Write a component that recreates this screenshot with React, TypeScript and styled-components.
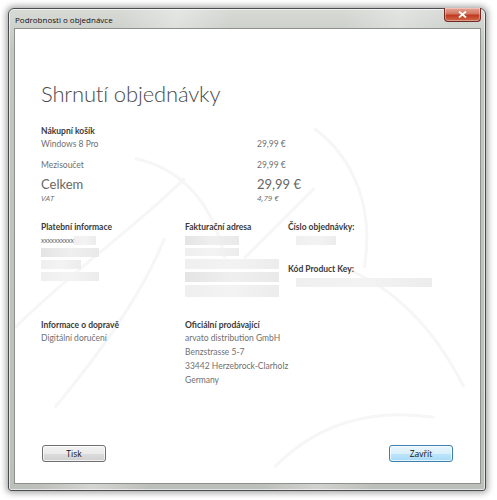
import React from 'react'
import styled, { createGlobalStyle } from 'styled-components'

const GlobalStyle = createGlobalStyle`
  html, body {
    margin: 0;
    padding: 0;
    background: #ffffff;
  }
  body {
    font-family: Lato, "Open Sans", sans-serif;
    color: #555;
  }
`

const seller = [
  'arvato distribution GmbH',
  'Benzstrasse 5-7',
  '33442 Herzebrock-Clarholz',
  'Germany',
]

export default function App() {
  return (
    <>
      <GlobalStyle />
      <Page>
        <Window>
          <TitleBar>
            <Caption>Podrobnosti o objednávce</Caption>
            <CloseButton aria-label="close">
              <svg width="9" height="7" viewBox="0 0 9 7">
                <path d="M1 0.5 L8 6.5 M8 0.5 L1 6.5" stroke="#fff" strokeWidth="1.8" />
              </svg>
            </CloseButton>
          </TitleBar>
          <Client>
            <Watermark viewBox="0 0 466 456" preserveAspectRatio="none">
              <path d="M0 300 C 60 240, 120 200, 170 150" />
              <path d="M40 380 C 90 320, 130 260, 150 210" />
              <path d="M120 130 C 170 140, 200 180, 210 230" />
              <path d="M300 100 C 340 130, 360 180, 350 240" />
              <path d="M230 230 L 300 160" />
              <path d="M330 240 C 380 260, 420 300, 450 360" />
              <path d="M260 440 C 300 400, 350 380, 420 390" />
            </Watermark>
            <Content>
              <Heading>Shrnutí objednávky</Heading>

              <Cart>
                <Label>Nákupní košík</Label>
                <Row>
                  <Cell>Windows 8 Pro</Cell>
                  <Cell>29,99 €</Cell>
                </Row>
                <Row $gap={9}>
                  <Cell>Mezisoučet</Cell>
                  <Cell>29,99 €</Cell>
                </Row>
                <Row $gap={6}>
                  <Cell $big>Celkem</Cell>
                  <Cell $big>29,99 €</Cell>
                </Row>
                <Row>
                  <Cell $italic>VAT</Cell>
                  <Cell $italic>4,79 €</Cell>
                </Row>
              </Cart>

              <InfoGrid>
                <Column>
                  <Label>Platební informace</Label>
                  <Masked>
                    <MaskLine>
                      <Tiny>xxxxxxxxxx</Tiny>
                      <Blot $w={22} $h={9} />
                    </MaskLine>
                    <Blot $w={58} $h={9} $dark />
                    <Blot $w={40} $h={9} />
                    <Blot $w={58} $h={9} />
                  </Masked>
                </Column>
                <Column>
                  <Label>Fakturační adresa</Label>
                  <Masked>
                    <Blot $w={54} $h={9} $dark />
                    <Blot $w={54} $h={8} />
                    <Blot $w={94} $h={10} />
                    <Blot $w={94} $h={10} $dark />
                    <Blot $w={94} $h={12} />
                  </Masked>
                </Column>
                <Column>
                  <Label>Číslo objednávky:</Label>
                  <Masked>
                    <Blot $w={40} $h={9} $indent={8} />
                  </Masked>
                  <Label $top={18}>Kód Product Key:</Label>
                  <Masked>
                    <Blot $w={136} $h={9} $indent={8} />
                  </Masked>
                </Column>
              </InfoGrid>

              <InfoGrid $top={22}>
                <Column>
                  <Label>Informace o dopravě</Label>
                  <Text>Digitální doručení</Text>
                </Column>
                <Column $span={2}>
                  <Label>Oficiální prodávající</Label>
                  {seller.map((line) => (
                    <Text key={line}>{line}</Text>
                  ))}
                </Column>
              </InfoGrid>
            </Content>

            <Footer>
              <Button>Tisk</Button>
              <Button $primary>Zavřít</Button>
            </Footer>
          </Client>
        </Window>
      </Page>
    </>
  )
}

const Page = styled.div`
  width: 497px;
  height: 500px;
  padding: 8px 0 0 8px;
  box-sizing: border-box;
`

const Window = styled.div`
  width: 478px;
  height: 483px;
  box-sizing: border-box;
  display: flex;
  flex-direction: column;
  padding: 0 4px 6px 5px;
  border: 1px solid #4a4d4f;
  border-radius: 6px 6px 3px 3px;
  background: linear-gradient(
      100deg,
      rgba(255, 255, 255, 0) 20%,
      rgba(255, 255, 255, 0.35) 30%,
      rgba(255, 255, 255, 0) 40%,
      rgba(255, 255, 255, 0) 60%,
      rgba(255, 255, 255, 0.3) 70%,
      rgba(255, 255, 255, 0) 80%
    ),
    linear-gradient(#d8dad6, #c3c6c1 40px, #bdbfba);
  box-shadow: 0 0 6px 2px rgba(0, 0, 0, 0.35), inset 0 0 0 1px rgba(255, 255, 255, 0.6);
`

const TitleBar = styled.div`
  height: 19px;
  display: flex;
  align-items: flex-start;
  justify-content: space-between;
`

const Caption = styled.div`
  padding: 5px 0 0 1px;
  font-family: "Open Sans", sans-serif;
  font-size: 8px;
  color: #111;
`

const CloseButton = styled.button`
  width: 37px;
  height: 14px;
  margin: -1px 0 0 0;
  padding: 0;
  display: flex;
  align-items: center;
  justify-content: center;
  border: 1px solid #6e2b27;
  border-top: none;
  border-radius: 0 0 4px 4px;
  background: linear-gradient(#e8a493, #d2765f 45%, #c0391f 55%, #d06848);
  box-shadow: inset 0 0 0 1px rgba(255, 255, 255, 0.35);
`

const Client = styled.div`
  position: relative;
  flex: 1;
  display: flex;
  flex-direction: column;
  background: #ffffff;
  border: 1px solid #8d918d;
  overflow: hidden;
`

const Watermark = styled.svg`
  position: absolute;
  inset: 0;
  width: 100%;
  height: 100%;
  fill: none;
  stroke: #f6f6f6;
  stroke-width: 3;
`

const Content = styled.div`
  position: relative;
  flex: 1;
  padding: 49px 0 0 26px;
`

const Heading = styled.h1`
  margin: 0 0 16px 0;
  font-family: Lato, sans-serif;
  font-weight: 300;
  font-size: 22px;
  line-height: 31px;
  letter-spacing: -0.15px;
  color: #4a4a4a;
`

const Cart = styled.div`
  width: 300px;
`

const Label = styled.div<{ $top?: number }>`
  margin-top: ${(p) => p.$top ?? 0}px;
  font-size: 8.5px;
  line-height: 12px;
  font-weight: 700;
  color: #3a3a3a;
`

const Row = styled.div<{ $gap?: number }>`
  display: grid;
  grid-template-columns: 216px 1fr;
  margin-top: ${(p) => p.$gap ?? 1}px;
`

const Cell = styled.div<{ $big?: boolean; $italic?: boolean }>`
  font-family: ${(p) => (p.$italic ? '"Open Sans", sans-serif' : 'Lato, sans-serif')};
  font-size: ${(p) => (p.$big ? 13 : p.$italic ? 8 : 8.5)}px;
  line-height: ${(p) => (p.$big ? 14 : 12)}px;
  font-style: ${(p) => (p.$italic ? 'italic' : 'normal')};
  color: ${(p) => (p.$big ? '#666' : '#707070')};
`

const InfoGrid = styled.div<{ $top?: number }>`
  display: grid;
  grid-template-columns: 144px 103px 1fr;
  margin-top: ${(p) => p.$top ?? 17}px;
`

const Column = styled.div<{ $span?: number }>`
  grid-column: span ${(p) => p.$span ?? 1};
  display: flex;
  flex-direction: column;
  align-items: flex-start;
`

const Masked = styled.div`
  display: flex;
  flex-direction: column;
  gap: 3px;
  margin-top: 3px;
`

const MaskLine = styled.div`
  display: flex;
  align-items: center;
`

const Tiny = styled.span`
  font-size: 7px;
  line-height: 9px;
  color: #666;
  letter-spacing: -0.2px;
`

const Blot = styled.div<{ $w: number; $h: number; $dark?: boolean; $indent?: number }>`
  width: ${(p) => p.$w}px;
  height: ${(p) => p.$h}px;
  margin-left: ${(p) => p.$indent ?? 0}px;
  background: ${(p) =>
    p.$dark
      ? 'linear-gradient(90deg, #e4e4e4, #efefef 50%, #e9e9e9)'
      : 'linear-gradient(90deg, #efefef, #f3f3f3 50%, #ececec)'};
`

const Text = styled.div`
  font-size: 8.5px;
  line-height: 14px;
  color: #707070;
`

const Footer = styled.div`
  position: relative;
  display: flex;
  justify-content: space-between;
  padding: 0 27px 21px 27px;
`

const Button = styled.button<{ $primary?: boolean }>`
  width: 64px;
  height: 17px;
  padding: 0;
  font-family: "Open Sans", sans-serif;
  font-size: 8.5px;
  color: #111;
  border-radius: 3px;
  border: 1px solid ${(p) => (p.$primary ? '#3c7fb1' : '#707070')};
  background: ${(p) =>
    p.$primary
      ? 'linear-gradient(#eaf6fd, #d9f0fc 50%, #bee6fd 50%, #a7d9f5)'
      : 'linear-gradient(#f2f2f2, #ebebeb 50%, #dddddd 50%, #cfcfcf)'};
  box-shadow: inset 0 0 0 1px rgba(255, 255, 255, 0.7);
`
